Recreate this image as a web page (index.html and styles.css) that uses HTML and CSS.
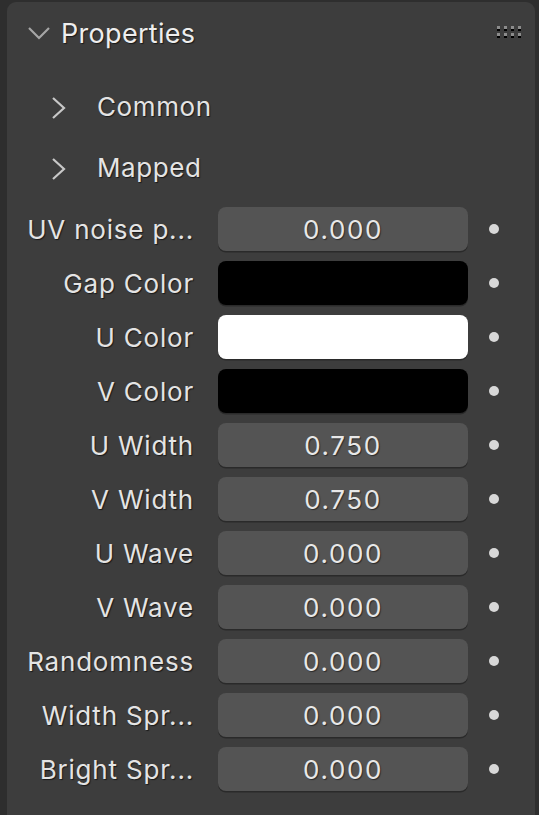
FILE: index.html
```html
<!DOCTYPE html>
<html lang="en">
<head>
    <meta charset="UTF-8">
    <title>Properties</title>
    <link rel="stylesheet" href="styles.css">
</head>
<body>
    <div class="panel">
        <div class="panel-header">
            <svg class="chevron-down" width="24" height="14" viewBox="0 0 24 14">
                <polyline points="2,2 12,12 22,2" fill="none" stroke="#a6a6a6" stroke-width="2.2"/>
            </svg>
            <span class="panel-title">Properties</span>
            <div class="grip">
                <span></span><span></span><span></span><span></span>
                <span></span><span></span><span></span><span></span>
            </div>
        </div>

        <div class="subpanels">
            <div class="subpanel">
                <svg class="chevron-right" width="15" height="24" viewBox="0 0 15 24">
                    <polyline points="2,2 13,12 2,22" fill="none" stroke="#c8c8c8" stroke-width="2.2"/>
                </svg>
                <span>Common</span>
            </div>
            <div class="subpanel">
                <svg class="chevron-right" width="15" height="24" viewBox="0 0 15 24">
                    <polyline points="2,2 13,12 2,22" fill="none" stroke="#c8c8c8" stroke-width="2.2"/>
                </svg>
                <span>Mapped</span>
            </div>
        </div>

        <div class="props">
            <label>UV noise p...</label>
            <div class="field">0.000</div>
            <div class="key"><span></span></div>

            <label>Gap Color</label>
            <div class="field swatch black"></div>
            <div class="key"><span></span></div>

            <label>U Color</label>
            <div class="field swatch white"></div>
            <div class="key"><span></span></div>

            <label>V Color</label>
            <div class="field swatch black"></div>
            <div class="key"><span></span></div>

            <label>U Width</label>
            <div class="field">0.750</div>
            <div class="key"><span></span></div>

            <label>V Width</label>
            <div class="field">0.750</div>
            <div class="key"><span></span></div>

            <label>U Wave</label>
            <div class="field">0.000</div>
            <div class="key"><span></span></div>

            <label>V Wave</label>
            <div class="field">0.000</div>
            <div class="key"><span></span></div>

            <label>Randomness</label>
            <div class="field">0.000</div>
            <div class="key"><span></span></div>

            <label>Width Spr...</label>
            <div class="field">0.000</div>
            <div class="key"><span></span></div>

            <label>Bright Spr...</label>
            <div class="field">0.000</div>
            <div class="key"><span></span></div>
        </div>
    </div>
</body>
</html>
```
FILE: styles.css
```css
html, body {
    margin: 0;
    height: 100%;
}
body {
    background-color: #2e2e2e;
    font-family: Inter, "Noto Sans", sans-serif;
    color: #e4e4e4;
    padding: 2px 4px 0 7px;
    box-sizing: border-box;
    overflow: hidden;
}
.panel {
    background: #3d3d3d;
    border-radius: 9px 9px 0 0;
    height: 100%;
}
.panel-header {
    display: flex;
    align-items: center;
    height: 62px;
    padding: 0 14px 0 20px;
}
.chevron-down {
    margin-right: 10px;
}
.panel-title {
    font-size: 27px;
    letter-spacing: 0.3px;
    color: #eeeeee;
    text-shadow: 1px 1px 1px rgba(0,0,0,0.6);
    flex: 1;
}
.grip {
    display: grid;
    grid-template-columns: repeat(4, 3px);
    column-gap: 4px;
    row-gap: 2px;
    margin-top: -2px;
}
.grip span {
    width: 3px;
    height: 3px;
    background: #8c8c8c;
    border-bottom: 2px solid #000;
}
.subpanels {
    padding-top: 12px;
}
.subpanel {
    display: flex;
    align-items: center;
    height: 61px;
    padding-left: 44px;
    font-size: 26px;
    letter-spacing: 0.6px;
    text-shadow: 1px 1px 1px rgba(0,0,0,0.6);
}
.chevron-right {
    margin-right: 31px;
    margin-top: 3px;
}
.props {
    display: grid;
    grid-template-columns: 211px 250px 52px;
    row-gap: 10px;
    padding-top: 9px;
    align-items: center;
}
.props label {
    font-size: 26px;
    letter-spacing: 0.8px;
    text-align: right;
    padding-right: 24px;
    white-space: nowrap;
    text-shadow: 1px 1px 1px rgba(0,0,0,0.6);
}
.field {
    height: 44px;
    border-radius: 8px;
    background: #545454;
    box-shadow: 0 1.5px 0 #2a2a2a;
    display: flex;
    align-items: center;
    justify-content: center;
    font-size: 26px;
    letter-spacing: 1.6px;
    color: #e8e8e8;
    text-shadow: 1px 1px 1px rgba(0,0,0,0.5);
}
.swatch.black {
    background: #000000;
}
.swatch.white {
    background: #ffffff;
}
.key {
    display: flex;
    justify-content: center;
}
.key span {
    width: 10px;
    height: 10px;
    border-radius: 50%;
    background: #d8d8d8;
}
```
